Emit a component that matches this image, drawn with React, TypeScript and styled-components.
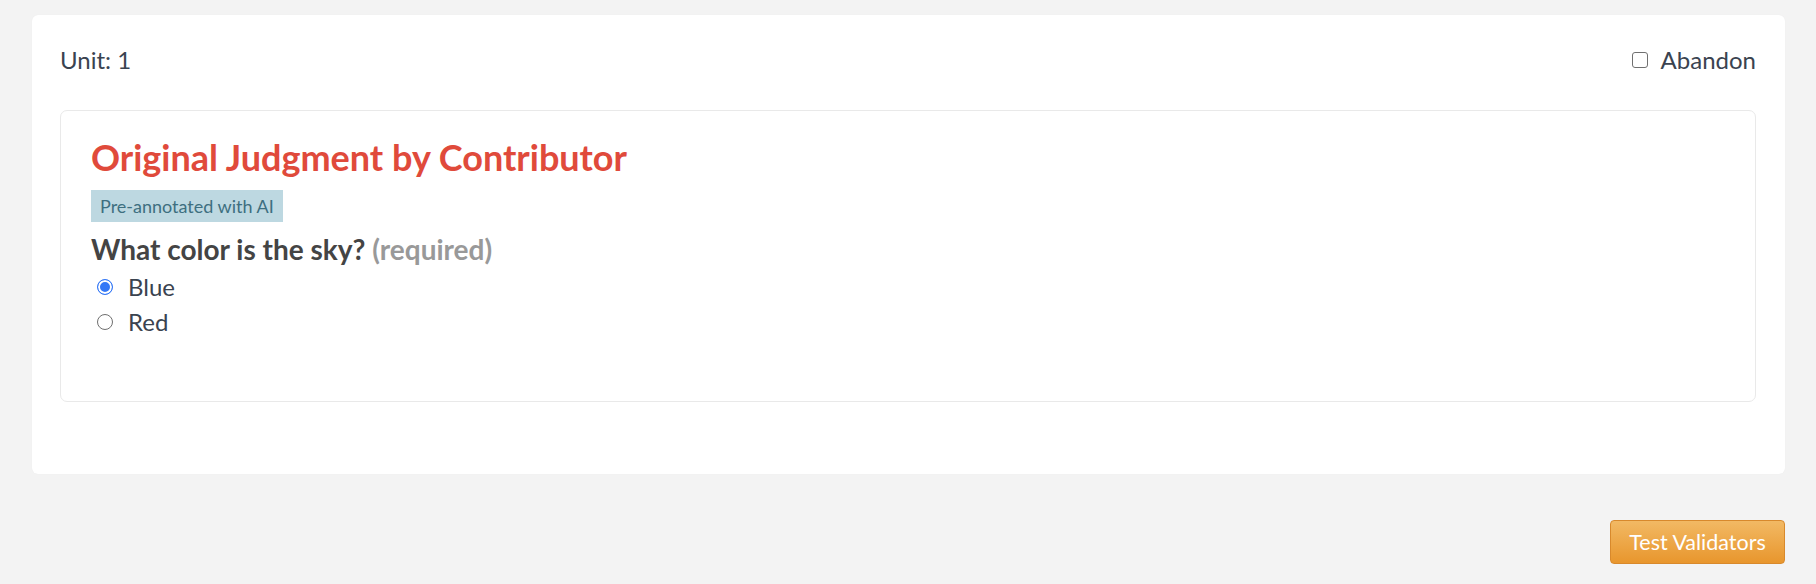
import React from 'react';
import styled, { createGlobalStyle } from 'styled-components';

const GlobalStyle = createGlobalStyle`
  html, body {
    margin: 0;
    padding: 0;
    background: #f3f3f3;
    font-family: Lato, "Open Sans", "Liberation Sans", sans-serif;
    color: #3a4350;
  }
`;

const Page = styled.main`
  display: flex;
  flex-direction: column;
  padding: 15px 31px 0 32px;
`;

const Card = styled.section`
  background: #fff;
  border-radius: 6px;
  padding: 28px 29px 72px 28px;
  box-shadow: 0 0 1px rgba(0, 0, 0, 0.06);
`;

const Header = styled.div`
  display: flex;
  align-items: center;
  justify-content: space-between;
  height: 33px;
  margin-bottom: 34px;
  font-size: 24px;
`;

const Check = styled.label`
  display: flex;
  align-items: center;
  gap: 13px;
  cursor: pointer;
`;

const Box = styled.input`
  appearance: none;
  margin: 0;
  width: 16px;
  height: 16px;
  border: 1.5px solid #707070;
  border-radius: 3px;
  background: #fff;
`;

const Judgment = styled.div`
  border: 1px solid #e9e9e9;
  border-radius: 7px;
  padding: 24px 30px 40px;
  min-height: 292px;
  box-sizing: border-box;
`;

const Title = styled.h2`
  margin: 0 0 11px;
  font-size: 36px;
  font-weight: 700;
  line-height: 44px;
  color: #e04a3b;
`;

const Badge = styled.span`
  display: inline-block;
  background: #bdd8e1;
  color: #3e6f80;
  font-size: 18px;
  line-height: 32px;
  padding: 0 9px;
`;

const Question = styled.h3`
  margin: 10px 0 3px;
  font-size: 28px;
  font-weight: 700;
  line-height: 34px;
  color: #444;
`;

const Muted = styled.span`
  color: #999;
`;

const Options = styled.div`
  display: flex;
  flex-direction: column;
  padding-left: 6px;
`;

const Option = styled.label`
  display: flex;
  align-items: center;
  gap: 15px;
  height: 35px;
  font-size: 24px;
  color: #3a4350;
`;

const Radio = styled.input`
  appearance: none;
  margin: 0;
  width: 16px;
  height: 16px;
  border-radius: 50%;
  border: 1px solid #6f6f6f;
  background: #fff;

  &:checked {
    border: 1.5px solid #3478f6;
    background: #3478f6;
    box-shadow: inset 0 0 0 2px #fff;
  }
`;

const Footer = styled.div`
  display: flex;
  justify-content: flex-end;
  padding-top: 46px;
`;

const Button = styled.button`
  font-family: inherit;
  font-size: 21.5px;
  color: #fff;
  width: 175px;
  height: 44px;
  border: 1px solid #d8892c;
  border-radius: 4px;
  background: linear-gradient(#f2b964, #e8962d);
  cursor: pointer;
`;

export default function App() {
  const [abandon, setAbandon] = React.useState(false);
  const [color, setColor] = React.useState('blue');

  return (
    <Page>
      <GlobalStyle />
      <Card>
        <Header>
          <span>Unit: 1</span>
          <Check>
            <Box type='checkbox' checked={abandon} onChange={() => setAbandon(!abandon)} />
            Abandon
          </Check>
        </Header>
        <Judgment>
          <Title>Original Judgment by Contributor</Title>
          <Badge>Pre-annotated with AI</Badge>
          <Question>What color is the sky? <Muted>(required)</Muted></Question>
          <Options>
            <Option>
              <Radio type='radio' name='sky' checked={color === 'blue'} onChange={() => setColor('blue')} />
              Blue
            </Option>
            <Option>
              <Radio type='radio' name='sky' checked={color === 'red'} onChange={() => setColor('red')} />
              Red
            </Option>
          </Options>
        </Judgment>
      </Card>
      <Footer>
        <Button>Test Validators</Button>
      </Footer>
    </Page>
  );
}
